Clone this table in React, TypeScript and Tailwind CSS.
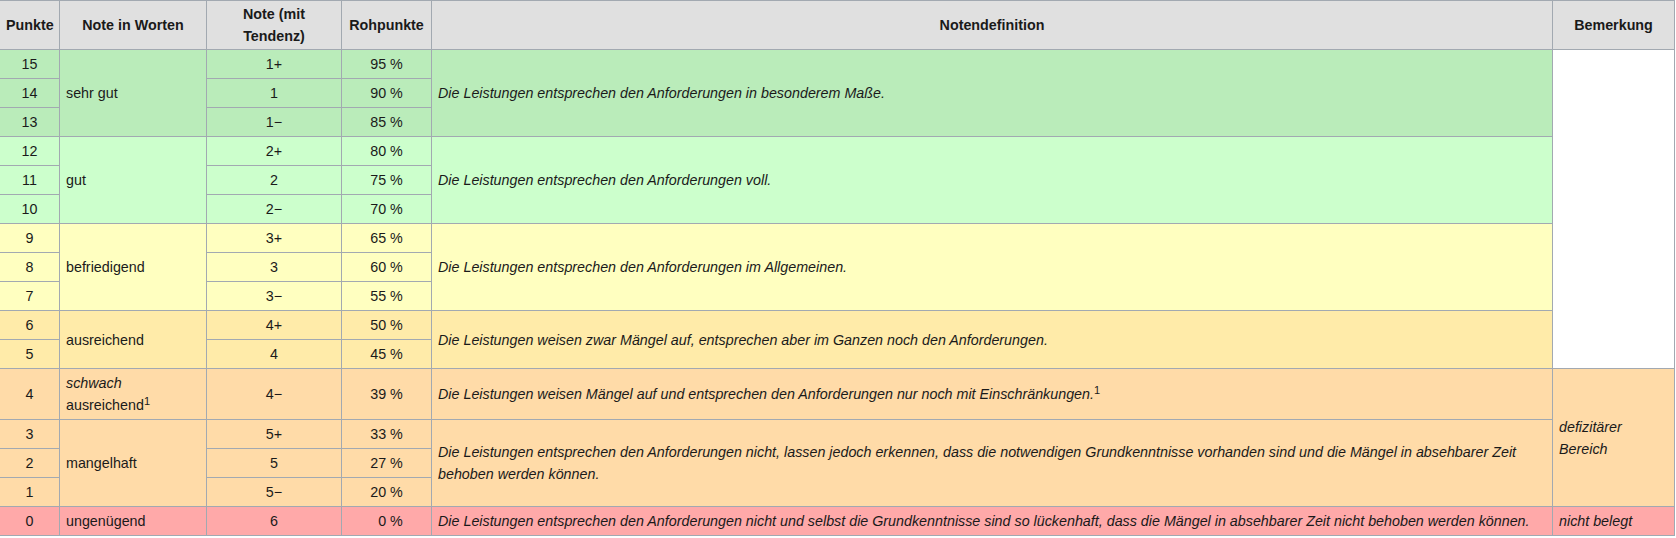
const border = 'border border-[#a2a9b1]';

type Row = {
  punkte: string;
  tendenz: string;
  roh: string;
  bg: string;
  worte?: { text: React.ReactNode; span: number };
  def?: { text: React.ReactNode; span: number };
  bem?: { text: React.ReactNode; span: number; bg: string };
};

const green = 'bg-[#baecba]';
const lightGreen = 'bg-[#ccffcc]';
const yellow = 'bg-[#ffffc0]';
const orange = 'bg-[#ffeba9]';
const darkOrange = 'bg-[#ffdba8]';
const red = 'bg-[#ffa9a9]';

const rows: Row[] = [
  {
    punkte: '15', tendenz: '1+', roh: '95 %', bg: green,
    worte: { text: 'sehr gut', span: 3 },
    def: { text: 'Die Leistungen entsprechen den Anforderungen in besonderem Maße.', span: 3 },
    bem: { text: '', span: 11, bg: 'bg-white' },
  },
  { punkte: '14', tendenz: '1', roh: '90 %', bg: green },
  { punkte: '13', tendenz: '1\u2212', roh: '85 %', bg: green },
  {
    punkte: '12', tendenz: '2+', roh: '80 %', bg: lightGreen,
    worte: { text: 'gut', span: 3 },
    def: { text: 'Die Leistungen entsprechen den Anforderungen voll.', span: 3 },
  },
  { punkte: '11', tendenz: '2', roh: '75 %', bg: lightGreen },
  { punkte: '10', tendenz: '2\u2212', roh: '70 %', bg: lightGreen },
  {
    punkte: '9', tendenz: '3+', roh: '65 %', bg: yellow,
    worte: { text: 'befriedigend', span: 3 },
    def: { text: 'Die Leistungen entsprechen den Anforderungen im Allgemeinen.', span: 3 },
  },
  { punkte: '8', tendenz: '3', roh: '60 %', bg: yellow },
  { punkte: '7', tendenz: '3\u2212', roh: '55 %', bg: yellow },
  {
    punkte: '6', tendenz: '4+', roh: '50 %', bg: orange,
    worte: { text: 'ausreichend', span: 2 },
    def: {
      text: 'Die Leistungen weisen zwar Mängel auf, entsprechen aber im Ganzen noch den Anforderungen.',
      span: 2,
    },
  },
  { punkte: '5', tendenz: '4', roh: '45 %', bg: orange },
  {
    punkte: '4', tendenz: '4\u2212', roh: '39 %', bg: darkOrange,
    worte: {
      text: (
        <>
          <i>schwach</i>
          <br />
          ausreichend<sup className="text-[11px]">1</sup>
        </>
      ),
      span: 1,
    },
    def: {
      text: (
        <>
          Die Leistungen weisen Mängel auf und entsprechen den Anforderungen nur noch mit
          Einschränkungen.<sup className="not-italic text-[11px]">1</sup>
        </>
      ),
      span: 1,
    },
    bem: { text: 'defizitärer Bereich', span: 4, bg: darkOrange },
  },
  {
    punkte: '3', tendenz: '5+', roh: '33 %', bg: darkOrange,
    worte: { text: 'mangelhaft', span: 3 },
    def: {
      text:
        'Die Leistungen entsprechen den Anforderungen nicht, lassen jedoch erkennen, dass die notwendigen Grundkenntnisse vorhanden sind und die Mängel in absehbarer Zeit behoben werden können.',
      span: 3,
    },
  },
  { punkte: '2', tendenz: '5', roh: '27 %', bg: darkOrange },
  { punkte: '1', tendenz: '5\u2212', roh: '20 %', bg: darkOrange },
  {
    punkte: '0', tendenz: '6', roh: '0 %', bg: red,
    worte: { text: 'ungenügend', span: 1 },
    def: {
      text:
        'Die Leistungen entsprechen den Anforderungen nicht und selbst die Grundkenntnisse sind so lückenhaft, dass die Mängel in absehbarer Zeit nicht behoben werden können.',
      span: 1,
    },
    bem: { text: 'nicht belegt', span: 1, bg: red },
  },
];

export default function App() {
  const cell = `${border} px-[6px] py-[3px] align-middle`;
  const head = `${border} bg-[#e0e0e0] px-[6px] py-[2px] font-bold text-center align-middle`;

  return (
    <div className="bg-white w-[1676px] h-[538px] overflow-hidden">
      <table
        className="border-collapse w-[1675px] -ml-px text-[14.3px] leading-[22px] text-[#1a1a1a] table-fixed"
        style={{ fontFamily: '"Liberation Sans", Arial, sans-serif' }}
      >
        <colgroup>
          <col className="w-[60px]" />
          <col className="w-[147px]" />
          <col className="w-[135px]" />
          <col className="w-[90px]" />
          <col className="w-[1121px]" />
          <col className="w-[122px]" />
        </colgroup>
        <thead>
          <tr>
            <th className={head}>Punkte</th>
            <th className={head}>Note in Worten</th>
            <th className={head}>
              Note (mit
              <br />
              Tendenz)
            </th>
            <th className={head}>Rohpunkte</th>
            <th className={head}>Notendefinition</th>
            <th className={head}>Bemerkung</th>
          </tr>
        </thead>
        <tbody>
          {rows.map((r) => (
            <tr key={r.punkte} className={r.bg}>
              <td className={`${cell} text-center`}>{r.punkte}</td>
              {r.worte && (
                <td rowSpan={r.worte.span} className={`${cell} text-left`}>
                  {r.worte.text}
                </td>
              )}
              <td className={`${cell} text-center`}>{r.tendenz}</td>
              <td className={`${cell} text-center`}>
                {r.punkte === '0' && <span className="invisible">0</span>}
                {r.roh}
              </td>
              {r.def && (
                <td rowSpan={r.def.span} className={`${cell} italic`}>
                  {r.def.text}
                </td>
              )}
              {r.bem && (
                <td rowSpan={r.bem.span} className={`${cell} italic ${r.bem.bg}`}>
                  {r.bem.text}
                </td>
              )}
            </tr>
          ))}
        </tbody>
      </table>
    </div>
  );
}
